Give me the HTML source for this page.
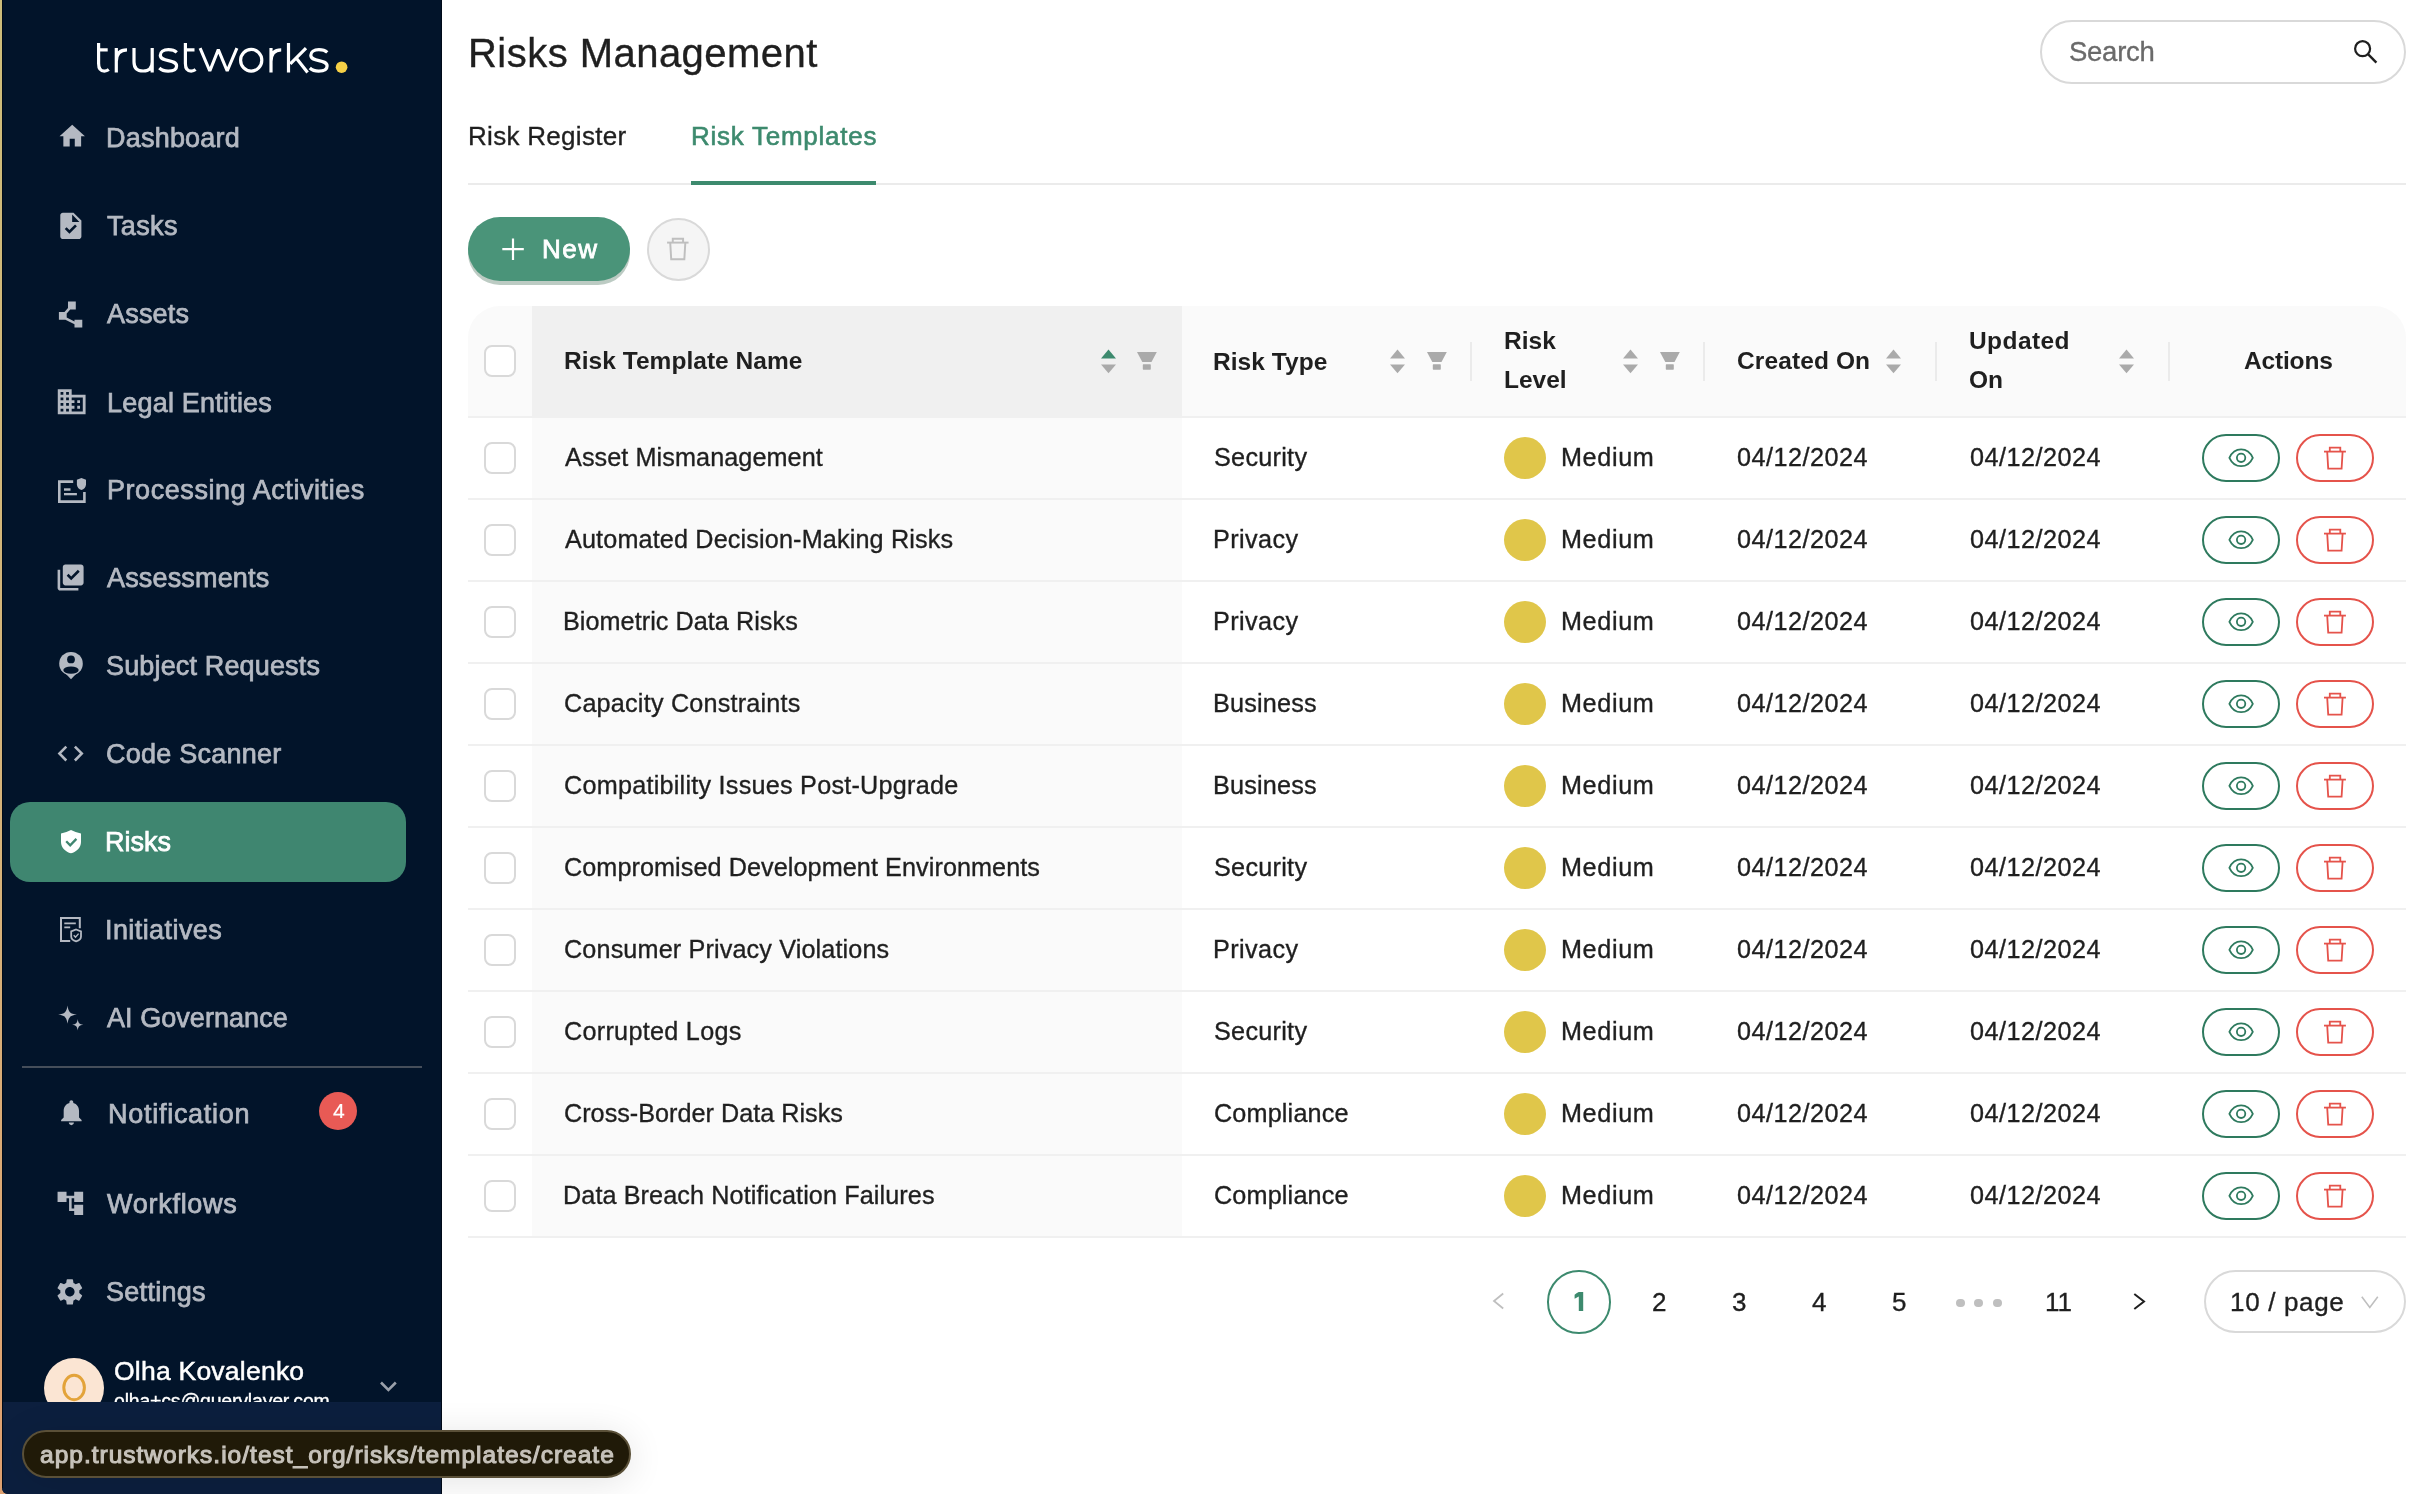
<!DOCTYPE html>
<html><head><meta charset="utf-8"><title>Risks Management</title>
<style>
html,body{margin:0;padding:0;}
body{width:2426px;height:1494px;overflow:hidden;position:relative;background:#fff;font-family:"Liberation Sans", sans-serif;}
.t{position:absolute;white-space:pre;line-height:1;will-change:transform;}
.a{position:absolute;display:block;}
.r{position:absolute;}
</style></head><body>
<div class="r" style="left:0px;top:0px;width:2px;height:1494px;background:linear-gradient(#cdbd7a,#d6b27a 60%,#e0a070);"></div><div class="r" style="left:0px;top:1470px;width:20px;height:24px;background:#dda070;"></div><div class="r" style="left:2px;top:0px;width:440px;height:1494px;background:#02142a;border-bottom-left-radius:6px;"></div><div class="r" style="left:2px;top:0px;width:1px;height:1488px;background:#000a18;"></div><div class="r" style="left:441px;top:0px;width:1px;height:1494px;background:#000a18;"></div><svg class="a" style="left:80px;top:30px" width="280" height="55" viewBox="80 30 280 55"><path d="M98.6 43V63.5C98.6 68.8 100.8 71.1 104.3 71.1C105.9 71.1 107.5 70.6 108.8 69.6M97 49.9H107.7M116.3 48.1V72.6M116.3 61.5C116.3 53.5 120.5 49.8 127 49.8M134 48.1V62C134 68 137.3 71 143.1 71C148.9 71 152.2 68 152.2 62M152.2 48.1V72.6M176.8 52.4C174.6 50.4 171.6 49.7 168.4 49.7C163.2 49.7 160.3 52 160.3 55.3C160.3 62.6 176.6 58.6 176.6 66C176.6 69.3 173.4 71.1 168.2 71.1C164.5 71.1 161.4 70 159.3 68M185.39999999999998 43V63.5C185.39999999999998 68.8 187.6 71.1 191.1 71.1C192.7 71.1 194.3 70.6 195.6 69.6M183.8 49.9H194.5M271 48.1V72.6M271 61.5C271 53.5 274.9 49.8 281.2 49.8M288.5 42.9V72.6M306 48.1L290.3 63.8M296.2 58L307.6 72.6M327.3 52.4C325.1 50.4 322.1 49.7 318.9 49.7C313.7 49.7 310.8 52 310.8 55.3C310.8 62.6 327.1 58.6 327.1 66C327.1 69.3 323.9 71.1 318.7 71.1C315.0 71.1 311.9 70 309.8 68" fill="none" stroke="#fff" stroke-width="3.2"/><path d="M200.1 48.1L209.8 71L218.3 49.6L227.2 71L236.9 48.1" fill="none" stroke="#fff" stroke-width="3.1" stroke-linejoin="bevel"/><ellipse cx="251.2" cy="60.25" rx="10.6" ry="10.85" fill="none" stroke="#fff" stroke-width="3.2"/><circle cx="341.6" cy="67.2" r="5.8" fill="#f6d046"/></svg><div class="r" style="left:10px;top:802px;width:396px;height:80px;background:#3f8670;border-radius:20px;"></div><div class="r" style="left:22px;top:1066px;width:400px;height:2px;background:#454e5a;"></div><div class="r" style="left:319px;top:1092px;width:38px;height:38px;background:#e85a55;border-radius:50%;"></div><div class="r" style="left:44px;top:1357.6px;width:60px;height:60px;background:#fbe5d3;border-radius:50%;"></div><svg class="a" style="left:40px;top:1350px;" width="70" height="70" viewBox="0 0 70 70"><ellipse cx="34.1" cy="37.5" rx="10.3" ry="12.2" fill="none" stroke="#e3a33a" stroke-width="3"/></svg><svg class="a" style="left:370px;top:1370px;" width="40" height="30" viewBox="0 0 40 30"><polyline points="11,12.5 18.4,20 25.8,12.5" fill="none" stroke="#9aa0aa" stroke-width="2.6"/></svg><svg class="a" style="left:57.00px;top:121.10px" width="30.48" height="30.48" viewBox="0 0 24 24"><path fill="#b4b9c2" d="M10 20v-6h4v6h5v-8h3L12 3 2 12h3v8z"/></svg><svg class="a" style="left:54.90px;top:210.30px" width="31.68" height="31.68" viewBox="0 0 24 24"><path fill="#b4b9c2" d="M14 2H6c-1.1 0-1.99.9-1.99 2L4 20c0 1.1.89 2 1.99 2H18c1.1 0 2-.9 2-2V8l-6-6zm-3.06 16L7.4 14.46l1.41-1.41 2.12 2.12 4.24-4.24 1.41 1.41L10.94 18zM13 9V3.5L18.5 9H13z"/></svg><svg class="a" style="left:55.10px;top:298.50px" width="31.20" height="31.20" viewBox="0 0 24 24"><path fill="#b4b9c2" d="M15 16v1.26l-6-3v-3.17L11.7 8H16V2h-6v4.9L7.3 10H3v6h5l7 3.5V22h6v-6z"/></svg><svg class="a" style="left:55.20px;top:384.80px" width="33.36" height="33.36" viewBox="0 0 24 24"><path fill="#b4b9c2" d="M12 7V3H2v18h20V7H12zM6 19H4v-2h2v2zm0-4H4v-2h2v2zm0-4H4V9h2v2zm0-4H4V5h2v2zm4 12H8v-2h2v2zm0-4H8v-2h2v2zm0-4H8V9h2v2zm0-4H8V5h2v2zm10 12h-8v-2h2v-2h-2v-2h2v-2h-2V9h8v10zm-2-8h-2v2h2v-2zm0 4h-2v2h2v-2z"/></svg><svg class="a" style="left:55.30px;top:562.40px" width="31.20" height="31.20" viewBox="0 0 24 24"><path fill="#b4b9c2" d="M20 2H8c-1.1 0-2 .9-2 2v12c0 1.1.9 2 2 2h12c1.1 0 2-.9 2-2V4c0-1.1-.9-2-2-2zm-7.53 12L9 10.5l1.4-1.41 2.07 2.08L17.6 6 19 7.41 12.47 14zM4 6H2v14c0 1.1.9 2 2 2h14v-2H4V6z"/></svg><svg class="a" style="left:55.40px;top:738.20px" width="31.20" height="31.20" viewBox="0 0 24 24"><path fill="#b4b9c2" d="M9.4 16.6L4.8 12l4.6-4.6L8 6l-6 6 6 6 1.4-1.4zm5.2 0l4.6-4.6-4.6-4.6L16 6l6 6-6 6-1.4-1.4z"/></svg><svg class="a" style="left:55.70px;top:1097.40px" width="30.72" height="30.72" viewBox="0 0 24 24"><path fill="#b4b9c2" d="M12 22c1.1 0 2-.9 2-2h-4c0 1.1.89 2 2 2zm6-6v-5c0-3.07-1.64-5.64-4.5-6.32V4c0-.83-.67-1.5-1.5-1.5s-1.5.67-1.5 1.5v.68C7.63 5.36 6 7.92 6 11v5l-2 2v1h16v-1l-2-2z"/></svg><svg class="a" style="left:55.40px;top:1188.20px" width="30.72" height="30.72" viewBox="0 0 24 24"><path fill="#b4b9c2" d="M22 11V3h-7v3H9V3H2v8h7V8h2v10h4v3h7v-8h-7v3h-2V8h2v3z"/></svg><svg class="a" style="left:54.40px;top:1276.40px" width="31.68" height="31.68" viewBox="0 0 24 24"><path fill="#b4b9c2" d="M19.14 12.94c.04-.3.06-.61.06-.94 0-.32-.02-.64-.07-.94l2.03-1.58c.18-.14.23-.41.12-.61l-1.92-3.32c-.12-.22-.37-.29-.59-.22l-2.39.96c-.5-.38-1.03-.7-1.62-.94l-.36-2.54c-.04-.24-.24-.41-.48-.41h-3.84c-.24 0-.43.17-.47.41l-.36 2.54c-.59.24-1.13.57-1.62.94l-2.39-.96c-.22-.08-.47 0-.59.22L2.74 8.87c-.12.21-.08.47.12.61l2.03 1.58c-.05.3-.09.63-.09.94s.02.64.07.94l-2.03 1.58c-.18.14-.23.41-.12.61l1.92 3.32c.12.22.37.29.59.22l2.39-.96c.5.38 1.03.7 1.62.94l.36 2.54c.05.24.24.41.48.41h3.84c.24 0 .44-.17.47-.41l.36-2.54c.59-.24 1.13-.56 1.62-.94l2.39.96c.22.08.47 0 .59-.22l1.92-3.32c.12-.22.07-.47-.12-.61l-2.01-1.58zM12 15.6c-1.98 0-3.6-1.62-3.6-3.6s1.62-3.6 3.6-3.6 3.6 1.62 3.6 3.6-1.62 3.6-3.6 3.6z"/></svg><svg class="a" style="left:50px;top:470px" width="45" height="40" viewBox="50 470 45 40"><path d="M73.2 481.6H59.3V501.6H84.4V492" fill="none" stroke="#b4b9c2" stroke-width="2.6"/><rect x="64" y="488.3" width="6.5" height="2.4" fill="#b4b9c2"/><rect x="64" y="493" width="12.9" height="2.3" fill="#b4b9c2"/><path d="M81.45 477.9L86 479.7V484.2C86 487 84 489.3 81.45 490.1C78.9 489.3 76.9 487 76.9 484.2V479.7Z" fill="#b4b9c2"/></svg><svg class="a" style="left:50px;top:640px" width="45" height="45" viewBox="50 640 45 45"><circle cx="71" cy="663.7" r="11.8" fill="#b4b9c2"/><path d="M65.5 673.5H76.5L71 679.2Z" fill="#b4b9c2"/><circle cx="71" cy="659.4" r="3.9" fill="#02142a"/><ellipse cx="71" cy="670.1" rx="7.7" ry="3.7" fill="#02142a"/></svg><svg class="a" style="left:50px;top:822px" width="45" height="40" viewBox="50 822 45 40"><path d="M71 830Q76 832.6 81 833.5V842C81 847.5 76.5 852 71 853.3C65.5 852 61 847.5 61 842V833.5Q66 832.6 71 830Z" fill="#fff"/><polyline points="66.2,841.3 70.2,845.3 76.4,838.9" fill="none" stroke="#3f8670" stroke-width="2.3"/></svg><svg class="a" style="left:50px;top:910px" width="45" height="40" viewBox="50 910 45 40"><path d="M70.2 940.9H61V918.1H79.8V928.2" fill="none" stroke="#b4b9c2" stroke-width="2"/><path d="M64.3 923.4H75.8M64.3 927.4H70.2" fill="none" stroke="#b4b9c2" stroke-width="1.6"/><path d="M76.1 929.5L81 931.4V936.5C81 938.6 79 940.6 76.1 941.4C73.2 940.6 71.2 938.6 71.2 936.5V931.4Z" fill="none" stroke="#b4b9c2" stroke-width="1.8"/><polyline points="73.7,935.2 75.5,937.1 78.6,933.6" fill="none" stroke="#b4b9c2" stroke-width="1.4"/></svg><svg class="a" style="left:50px;top:998px" width="45" height="40" viewBox="50 998 45 40"><path d="M67.5 1005.4C68.41 1012.0 70.1 1013.69 76.9 1014.6C70.1 1015.51 68.41 1017.2 67.5 1023.8000000000001C66.59 1017.2 64.9 1015.51 58.1 1014.6C64.9 1013.69 66.59 1012.0 67.5 1005.4Z" fill="#b4b9c2"/><path d="M77.7 1019.0999999999999C78.26 1023.1999999999999 79.3 1024.24 83.3 1024.8C79.3 1025.36 78.26 1026.3999999999999 77.7 1030.5C77.14 1026.3999999999999 76.10000000000001 1025.36 72.10000000000001 1024.8C76.10000000000001 1024.24 77.14 1023.1999999999999 77.7 1019.0999999999999Z" fill="#b4b9c2"/></svg><div class="r" style="left:2040px;top:20px;width:366px;height:64px;background:#fff;box-sizing:border-box;border:2px solid #d9d9d9;border-radius:32px;"></div><svg class="a" style="left:2345px;top:35px" width="40" height="35" viewBox="2345 35 40 35"><circle cx="2362.6" cy="48.7" r="7.5" fill="none" stroke="#1f1f1f" stroke-width="2.2"/><line x1="2368" y1="54.2" x2="2376.4" y2="62.6" stroke="#1f1f1f" stroke-width="2.4"/></svg><div class="r" style="left:468px;top:183px;width:1938px;height:2px;background:#ebebeb;"></div><div class="r" style="left:691px;top:181px;width:185px;height:4px;background:#3d8a6e;"></div><div class="r" style="left:468px;top:217px;width:162px;height:64px;background:#4a9479;border-radius:32px;box-shadow:0 4px 0 #bccbc3;"></div><svg class="a" style="left:495px;top:232px" width="35" height="35" viewBox="495 232 35 35"><path d="M502.3 249.1H523.8M513 238.4V259.9" stroke="#fff" stroke-width="2.2" fill="none"/></svg><div class="r" style="left:646.5px;top:217.5px;width:63px;height:63px;background:#f5f5f5;box-sizing:border-box;border:2px solid #d9d9d9;border-radius:50%;"></div><svg class="a" style="left:660px;top:232px" width="35" height="35" viewBox="660 232 35 35"><g transform="translate(666.8 237.7) scale(0.98)" fill="none" stroke="#bfbfbf" stroke-width="2"><path d="M0.3 5H22.2"/><path d="M6.1 5V1H16.6V5"/><path d="M3.5 5L4.5 22H17.9L18.9 5"/></g></svg><div class="r" style="left:468px;top:306px;width:1938px;height:110px;background:#fafafa;border-radius:32px 32px 0 0;"></div><div class="r" style="left:532px;top:306px;width:650px;height:110px;background:#f0f0f0;"></div><div class="r" style="left:532px;top:418px;width:650px;height:818px;background:#fafafa;"></div><div class="r" style="left:468px;top:416px;width:1938px;height:2px;background:#f0f0f0;"></div><div class="r" style="left:468px;top:498px;width:1938px;height:2px;background:#f0f0f0;"></div><div class="r" style="left:468px;top:580px;width:1938px;height:2px;background:#f0f0f0;"></div><div class="r" style="left:468px;top:662px;width:1938px;height:2px;background:#f0f0f0;"></div><div class="r" style="left:468px;top:744px;width:1938px;height:2px;background:#f0f0f0;"></div><div class="r" style="left:468px;top:826px;width:1938px;height:2px;background:#f0f0f0;"></div><div class="r" style="left:468px;top:908px;width:1938px;height:2px;background:#f0f0f0;"></div><div class="r" style="left:468px;top:990px;width:1938px;height:2px;background:#f0f0f0;"></div><div class="r" style="left:468px;top:1072px;width:1938px;height:2px;background:#f0f0f0;"></div><div class="r" style="left:468px;top:1154px;width:1938px;height:2px;background:#f0f0f0;"></div><div class="r" style="left:468px;top:1236px;width:1938px;height:2px;background:#f0f0f0;"></div><div class="r" style="left:484px;top:344.5px;width:32px;height:32px;background:#fff;box-sizing:border-box;border:2px solid #d9d9d9;border-radius:8px;"></div><div class="r" style="left:484px;top:441.5px;width:32px;height:32px;background:#fff;box-sizing:border-box;border:2px solid #d9d9d9;border-radius:8px;"></div><div class="r" style="left:484px;top:523.5px;width:32px;height:32px;background:#fff;box-sizing:border-box;border:2px solid #d9d9d9;border-radius:8px;"></div><div class="r" style="left:484px;top:605.5px;width:32px;height:32px;background:#fff;box-sizing:border-box;border:2px solid #d9d9d9;border-radius:8px;"></div><div class="r" style="left:484px;top:687.5px;width:32px;height:32px;background:#fff;box-sizing:border-box;border:2px solid #d9d9d9;border-radius:8px;"></div><div class="r" style="left:484px;top:769.5px;width:32px;height:32px;background:#fff;box-sizing:border-box;border:2px solid #d9d9d9;border-radius:8px;"></div><div class="r" style="left:484px;top:851.5px;width:32px;height:32px;background:#fff;box-sizing:border-box;border:2px solid #d9d9d9;border-radius:8px;"></div><div class="r" style="left:484px;top:933.5px;width:32px;height:32px;background:#fff;box-sizing:border-box;border:2px solid #d9d9d9;border-radius:8px;"></div><div class="r" style="left:484px;top:1015.5px;width:32px;height:32px;background:#fff;box-sizing:border-box;border:2px solid #d9d9d9;border-radius:8px;"></div><div class="r" style="left:484px;top:1097.5px;width:32px;height:32px;background:#fff;box-sizing:border-box;border:2px solid #d9d9d9;border-radius:8px;"></div><div class="r" style="left:484px;top:1179.5px;width:32px;height:32px;background:#fff;box-sizing:border-box;border:2px solid #d9d9d9;border-radius:8px;"></div><svg class="a" style="left:1099.0px;top:347px" width="20" height="30" viewBox="1099.0 347 20 30"><path d="M1101.0 358.4L1108.5 349.4L1116.0 358.4Z" fill="#3d8a6e"/><path d="M1101.0 364.4L1108.5 373.3L1116.0 364.4Z" fill="#aaaaaa"/></svg><svg class="a" style="left:1135.2px;top:349px" width="25" height="24" viewBox="1135.2 349 25 24"><path d="M1137.2 351.9H1157.0L1151.7 362.1H1142.5Z" fill="#aaaaaa"/><rect x="1143.0" y="364.3" width="8" height="5.4" rx="0.6" fill="#aaaaaa"/></svg><svg class="a" style="left:1388.2px;top:347px" width="20" height="30" viewBox="1388.2 347 20 30"><path d="M1390.2 358.4L1397.7 349.4L1405.2 358.4Z" fill="#aaaaaa"/><path d="M1390.2 364.4L1397.7 373.3L1405.2 364.4Z" fill="#aaaaaa"/></svg><svg class="a" style="left:1424.6px;top:349px" width="25" height="24" viewBox="1424.6 349 25 24"><path d="M1426.6 351.9H1446.3999999999999L1441.1 362.1H1431.8999999999999Z" fill="#aaaaaa"/><rect x="1432.3999999999999" y="364.3" width="8" height="5.4" rx="0.6" fill="#aaaaaa"/></svg><svg class="a" style="left:1621.4px;top:347px" width="20" height="30" viewBox="1621.4 347 20 30"><path d="M1623.4 358.4L1630.9 349.4L1638.4 358.4Z" fill="#aaaaaa"/><path d="M1623.4 364.4L1630.9 373.3L1638.4 364.4Z" fill="#aaaaaa"/></svg><svg class="a" style="left:1657.7px;top:349px" width="25" height="24" viewBox="1657.7 349 25 24"><path d="M1659.7 351.9H1679.5L1674.2 362.1H1665.0Z" fill="#aaaaaa"/><rect x="1665.5" y="364.3" width="8" height="5.4" rx="0.6" fill="#aaaaaa"/></svg><svg class="a" style="left:1883.6px;top:347px" width="20" height="30" viewBox="1883.6 347 20 30"><path d="M1885.6 358.4L1893.1 349.4L1900.6 358.4Z" fill="#aaaaaa"/><path d="M1885.6 364.4L1893.1 373.3L1900.6 364.4Z" fill="#aaaaaa"/></svg><svg class="a" style="left:2116.5px;top:347px" width="20" height="30" viewBox="2116.5 347 20 30"><path d="M2118.5 358.4L2126.0 349.4L2133.5 358.4Z" fill="#aaaaaa"/><path d="M2118.5 364.4L2126.0 373.3L2133.5 364.4Z" fill="#aaaaaa"/></svg><div class="r" style="left:1469.7px;top:341.5px;width:2px;height:39px;background:#ebebeb;"></div><div class="r" style="left:1702.6px;top:341.5px;width:2px;height:39px;background:#ebebeb;"></div><div class="r" style="left:1934.8px;top:341.5px;width:2px;height:39px;background:#ebebeb;"></div><div class="r" style="left:2167.9px;top:341.5px;width:2px;height:39px;background:#ebebeb;"></div><div class="r" style="left:1504px;top:437px;width:42px;height:42px;background:#e0c64a;border-radius:50%;"></div><div class="r" style="left:2202.2px;top:434.2px;width:77.7px;height:47.5px;background:#fff;box-sizing:border-box;border:2px solid #2e7a5e;border-radius:24px;"></div><div class="r" style="left:2296.2px;top:434.2px;width:77.6px;height:47.5px;background:#fff;box-sizing:border-box;border:2px solid #e5534b;border-radius:24px;"></div><svg class="a" style="left:2220px;top:440px" width="45" height="35" viewBox="2220 440 45 35"><path d="M2229.4 457.8C2234.5 446.6 2247.7 446.6 2252.8 457.8C2247.7 469 2234.5 469 2229.4 457.8Z" fill="none" stroke="#2e7a5e" stroke-width="1.8"/><circle cx="2241.1" cy="457.8" r="4.2" fill="none" stroke="#2e7a5e" stroke-width="1.8"/></svg><svg class="a" style="left:2315px;top:440px" width="40" height="35" viewBox="2315 440 40 35"><g transform="translate(2323.7 446.6) scale(1.0)" fill="none" stroke="#e5534b" stroke-width="1.8"><path d="M0.3 5H22.2"/><path d="M6.1 5V1H16.6V5"/><path d="M3.5 5L4.5 22H17.9L18.9 5"/></g></svg><div class="r" style="left:1504px;top:519px;width:42px;height:42px;background:#e0c64a;border-radius:50%;"></div><div class="r" style="left:2202.2px;top:516.2px;width:77.7px;height:47.5px;background:#fff;box-sizing:border-box;border:2px solid #2e7a5e;border-radius:24px;"></div><div class="r" style="left:2296.2px;top:516.2px;width:77.6px;height:47.5px;background:#fff;box-sizing:border-box;border:2px solid #e5534b;border-radius:24px;"></div><svg class="a" style="left:2220px;top:522px" width="45" height="35" viewBox="2220 522 45 35"><path d="M2229.4 539.8C2234.5 528.6 2247.7 528.6 2252.8 539.8C2247.7 551 2234.5 551 2229.4 539.8Z" fill="none" stroke="#2e7a5e" stroke-width="1.8"/><circle cx="2241.1" cy="539.8" r="4.2" fill="none" stroke="#2e7a5e" stroke-width="1.8"/></svg><svg class="a" style="left:2315px;top:522px" width="40" height="35" viewBox="2315 522 40 35"><g transform="translate(2323.7 528.6) scale(1.0)" fill="none" stroke="#e5534b" stroke-width="1.8"><path d="M0.3 5H22.2"/><path d="M6.1 5V1H16.6V5"/><path d="M3.5 5L4.5 22H17.9L18.9 5"/></g></svg><div class="r" style="left:1504px;top:601px;width:42px;height:42px;background:#e0c64a;border-radius:50%;"></div><div class="r" style="left:2202.2px;top:598.2px;width:77.7px;height:47.5px;background:#fff;box-sizing:border-box;border:2px solid #2e7a5e;border-radius:24px;"></div><div class="r" style="left:2296.2px;top:598.2px;width:77.6px;height:47.5px;background:#fff;box-sizing:border-box;border:2px solid #e5534b;border-radius:24px;"></div><svg class="a" style="left:2220px;top:604px" width="45" height="35" viewBox="2220 604 45 35"><path d="M2229.4 621.8C2234.5 610.6 2247.7 610.6 2252.8 621.8C2247.7 633 2234.5 633 2229.4 621.8Z" fill="none" stroke="#2e7a5e" stroke-width="1.8"/><circle cx="2241.1" cy="621.8" r="4.2" fill="none" stroke="#2e7a5e" stroke-width="1.8"/></svg><svg class="a" style="left:2315px;top:604px" width="40" height="35" viewBox="2315 604 40 35"><g transform="translate(2323.7 610.6) scale(1.0)" fill="none" stroke="#e5534b" stroke-width="1.8"><path d="M0.3 5H22.2"/><path d="M6.1 5V1H16.6V5"/><path d="M3.5 5L4.5 22H17.9L18.9 5"/></g></svg><div class="r" style="left:1504px;top:683px;width:42px;height:42px;background:#e0c64a;border-radius:50%;"></div><div class="r" style="left:2202.2px;top:680.2px;width:77.7px;height:47.5px;background:#fff;box-sizing:border-box;border:2px solid #2e7a5e;border-radius:24px;"></div><div class="r" style="left:2296.2px;top:680.2px;width:77.6px;height:47.5px;background:#fff;box-sizing:border-box;border:2px solid #e5534b;border-radius:24px;"></div><svg class="a" style="left:2220px;top:686px" width="45" height="35" viewBox="2220 686 45 35"><path d="M2229.4 703.8C2234.5 692.6 2247.7 692.6 2252.8 703.8C2247.7 715 2234.5 715 2229.4 703.8Z" fill="none" stroke="#2e7a5e" stroke-width="1.8"/><circle cx="2241.1" cy="703.8" r="4.2" fill="none" stroke="#2e7a5e" stroke-width="1.8"/></svg><svg class="a" style="left:2315px;top:686px" width="40" height="35" viewBox="2315 686 40 35"><g transform="translate(2323.7 692.6) scale(1.0)" fill="none" stroke="#e5534b" stroke-width="1.8"><path d="M0.3 5H22.2"/><path d="M6.1 5V1H16.6V5"/><path d="M3.5 5L4.5 22H17.9L18.9 5"/></g></svg><div class="r" style="left:1504px;top:765px;width:42px;height:42px;background:#e0c64a;border-radius:50%;"></div><div class="r" style="left:2202.2px;top:762.2px;width:77.7px;height:47.5px;background:#fff;box-sizing:border-box;border:2px solid #2e7a5e;border-radius:24px;"></div><div class="r" style="left:2296.2px;top:762.2px;width:77.6px;height:47.5px;background:#fff;box-sizing:border-box;border:2px solid #e5534b;border-radius:24px;"></div><svg class="a" style="left:2220px;top:768px" width="45" height="35" viewBox="2220 768 45 35"><path d="M2229.4 785.8C2234.5 774.6 2247.7 774.6 2252.8 785.8C2247.7 797 2234.5 797 2229.4 785.8Z" fill="none" stroke="#2e7a5e" stroke-width="1.8"/><circle cx="2241.1" cy="785.8" r="4.2" fill="none" stroke="#2e7a5e" stroke-width="1.8"/></svg><svg class="a" style="left:2315px;top:768px" width="40" height="35" viewBox="2315 768 40 35"><g transform="translate(2323.7 774.6) scale(1.0)" fill="none" stroke="#e5534b" stroke-width="1.8"><path d="M0.3 5H22.2"/><path d="M6.1 5V1H16.6V5"/><path d="M3.5 5L4.5 22H17.9L18.9 5"/></g></svg><div class="r" style="left:1504px;top:847px;width:42px;height:42px;background:#e0c64a;border-radius:50%;"></div><div class="r" style="left:2202.2px;top:844.2px;width:77.7px;height:47.5px;background:#fff;box-sizing:border-box;border:2px solid #2e7a5e;border-radius:24px;"></div><div class="r" style="left:2296.2px;top:844.2px;width:77.6px;height:47.5px;background:#fff;box-sizing:border-box;border:2px solid #e5534b;border-radius:24px;"></div><svg class="a" style="left:2220px;top:850px" width="45" height="35" viewBox="2220 850 45 35"><path d="M2229.4 867.8C2234.5 856.6 2247.7 856.6 2252.8 867.8C2247.7 879 2234.5 879 2229.4 867.8Z" fill="none" stroke="#2e7a5e" stroke-width="1.8"/><circle cx="2241.1" cy="867.8" r="4.2" fill="none" stroke="#2e7a5e" stroke-width="1.8"/></svg><svg class="a" style="left:2315px;top:850px" width="40" height="35" viewBox="2315 850 40 35"><g transform="translate(2323.7 856.6) scale(1.0)" fill="none" stroke="#e5534b" stroke-width="1.8"><path d="M0.3 5H22.2"/><path d="M6.1 5V1H16.6V5"/><path d="M3.5 5L4.5 22H17.9L18.9 5"/></g></svg><div class="r" style="left:1504px;top:929px;width:42px;height:42px;background:#e0c64a;border-radius:50%;"></div><div class="r" style="left:2202.2px;top:926.2px;width:77.7px;height:47.5px;background:#fff;box-sizing:border-box;border:2px solid #2e7a5e;border-radius:24px;"></div><div class="r" style="left:2296.2px;top:926.2px;width:77.6px;height:47.5px;background:#fff;box-sizing:border-box;border:2px solid #e5534b;border-radius:24px;"></div><svg class="a" style="left:2220px;top:932px" width="45" height="35" viewBox="2220 932 45 35"><path d="M2229.4 949.8C2234.5 938.6 2247.7 938.6 2252.8 949.8C2247.7 961 2234.5 961 2229.4 949.8Z" fill="none" stroke="#2e7a5e" stroke-width="1.8"/><circle cx="2241.1" cy="949.8" r="4.2" fill="none" stroke="#2e7a5e" stroke-width="1.8"/></svg><svg class="a" style="left:2315px;top:932px" width="40" height="35" viewBox="2315 932 40 35"><g transform="translate(2323.7 938.6) scale(1.0)" fill="none" stroke="#e5534b" stroke-width="1.8"><path d="M0.3 5H22.2"/><path d="M6.1 5V1H16.6V5"/><path d="M3.5 5L4.5 22H17.9L18.9 5"/></g></svg><div class="r" style="left:1504px;top:1011px;width:42px;height:42px;background:#e0c64a;border-radius:50%;"></div><div class="r" style="left:2202.2px;top:1008.2px;width:77.7px;height:47.5px;background:#fff;box-sizing:border-box;border:2px solid #2e7a5e;border-radius:24px;"></div><div class="r" style="left:2296.2px;top:1008.2px;width:77.6px;height:47.5px;background:#fff;box-sizing:border-box;border:2px solid #e5534b;border-radius:24px;"></div><svg class="a" style="left:2220px;top:1014px" width="45" height="35" viewBox="2220 1014 45 35"><path d="M2229.4 1031.8C2234.5 1020.6 2247.7 1020.6 2252.8 1031.8C2247.7 1043 2234.5 1043 2229.4 1031.8Z" fill="none" stroke="#2e7a5e" stroke-width="1.8"/><circle cx="2241.1" cy="1031.8" r="4.2" fill="none" stroke="#2e7a5e" stroke-width="1.8"/></svg><svg class="a" style="left:2315px;top:1014px" width="40" height="35" viewBox="2315 1014 40 35"><g transform="translate(2323.7 1020.6) scale(1.0)" fill="none" stroke="#e5534b" stroke-width="1.8"><path d="M0.3 5H22.2"/><path d="M6.1 5V1H16.6V5"/><path d="M3.5 5L4.5 22H17.9L18.9 5"/></g></svg><div class="r" style="left:1504px;top:1093px;width:42px;height:42px;background:#e0c64a;border-radius:50%;"></div><div class="r" style="left:2202.2px;top:1090.2px;width:77.7px;height:47.5px;background:#fff;box-sizing:border-box;border:2px solid #2e7a5e;border-radius:24px;"></div><div class="r" style="left:2296.2px;top:1090.2px;width:77.6px;height:47.5px;background:#fff;box-sizing:border-box;border:2px solid #e5534b;border-radius:24px;"></div><svg class="a" style="left:2220px;top:1096px" width="45" height="35" viewBox="2220 1096 45 35"><path d="M2229.4 1113.8C2234.5 1102.6 2247.7 1102.6 2252.8 1113.8C2247.7 1125 2234.5 1125 2229.4 1113.8Z" fill="none" stroke="#2e7a5e" stroke-width="1.8"/><circle cx="2241.1" cy="1113.8" r="4.2" fill="none" stroke="#2e7a5e" stroke-width="1.8"/></svg><svg class="a" style="left:2315px;top:1096px" width="40" height="35" viewBox="2315 1096 40 35"><g transform="translate(2323.7 1102.6) scale(1.0)" fill="none" stroke="#e5534b" stroke-width="1.8"><path d="M0.3 5H22.2"/><path d="M6.1 5V1H16.6V5"/><path d="M3.5 5L4.5 22H17.9L18.9 5"/></g></svg><div class="r" style="left:1504px;top:1175px;width:42px;height:42px;background:#e0c64a;border-radius:50%;"></div><div class="r" style="left:2202.2px;top:1172.2px;width:77.7px;height:47.5px;background:#fff;box-sizing:border-box;border:2px solid #2e7a5e;border-radius:24px;"></div><div class="r" style="left:2296.2px;top:1172.2px;width:77.6px;height:47.5px;background:#fff;box-sizing:border-box;border:2px solid #e5534b;border-radius:24px;"></div><svg class="a" style="left:2220px;top:1178px" width="45" height="35" viewBox="2220 1178 45 35"><path d="M2229.4 1195.8C2234.5 1184.6 2247.7 1184.6 2252.8 1195.8C2247.7 1207 2234.5 1207 2229.4 1195.8Z" fill="none" stroke="#2e7a5e" stroke-width="1.8"/><circle cx="2241.1" cy="1195.8" r="4.2" fill="none" stroke="#2e7a5e" stroke-width="1.8"/></svg><svg class="a" style="left:2315px;top:1178px" width="40" height="35" viewBox="2315 1178 40 35"><g transform="translate(2323.7 1184.6) scale(1.0)" fill="none" stroke="#e5534b" stroke-width="1.8"><path d="M0.3 5H22.2"/><path d="M6.1 5V1H16.6V5"/><path d="M3.5 5L4.5 22H17.9L18.9 5"/></g></svg><svg class="a" style="left:1485px;top:1285px" width="30" height="30" viewBox="1485 1285 30 30"><polyline points="1503.2,1293.5 1494,1301 1503.2,1308.5" fill="none" stroke="#bfbfbf" stroke-width="1.8"/></svg><div class="r" style="left:1547.3px;top:1270.4px;width:63.5px;height:63.5px;background:#fff;box-sizing:border-box;border:2px solid #3d8a6e;border-radius:50%;"></div><svg class="a" style="left:1565px;top:1285px" width="30" height="30" viewBox="1565 1285 30 30"><path d="M1578.7 1291.9H1583.2V1311H1578.8V1296.4L1574.6 1298.7V1294.8Q1576.4 1292.8 1578.7 1291.9Z" fill="#3d8a6e"/></svg><div class="r" style="left:1956.0px;top:1298.6px;width:8.6px;height:8.6px;background:#bfbfbf;border-radius:50%;"></div><div class="r" style="left:1974.4px;top:1298.6px;width:8.6px;height:8.6px;background:#bfbfbf;border-radius:50%;"></div><div class="r" style="left:1993.2px;top:1298.6px;width:8.6px;height:8.6px;background:#bfbfbf;border-radius:50%;"></div><svg class="a" style="left:2125px;top:1285px" width="30" height="30" viewBox="2125 1285 30 30"><polyline points="2134.3,1294 2144,1301.5 2134.3,1309" fill="none" stroke="#1f1f1f" stroke-width="2"/></svg><div class="r" style="left:2203.6px;top:1270.2px;width:202px;height:63px;background:#fff;box-sizing:border-box;border:2px solid #d9d9d9;border-radius:32px;"></div><svg class="a" style="left:2355px;top:1290px" width="30" height="25" viewBox="2355 1290 30 25"><polyline points="2361.8,1296.8 2369.8,1307.5 2377.8,1296.8" fill="none" stroke="#bfbfbf" stroke-width="1.6"/></svg>
<div class="t" style="left:106.10px;top:125.00px;font-size:27px;color:#b4b9c2;letter-spacing:0.212px;-webkit-text-stroke:0.75px #b4b9c2;">Dashboard</div><div class="t" style="left:107.10px;top:213.00px;font-size:27px;color:#b4b9c2;letter-spacing:0.350px;-webkit-text-stroke:0.75px #b4b9c2;">Tasks</div><div class="t" style="left:106.50px;top:301.00px;font-size:27px;color:#b4b9c2;letter-spacing:0.200px;-webkit-text-stroke:0.75px #b4b9c2;">Assets</div><div class="t" style="left:106.90px;top:389.50px;font-size:27px;color:#b4b9c2;letter-spacing:0.208px;-webkit-text-stroke:0.75px #b4b9c2;">Legal Entities</div><div class="t" style="left:106.90px;top:477.00px;font-size:27px;color:#b4b9c2;letter-spacing:0.560px;-webkit-text-stroke:0.75px #b4b9c2;">Processing Activities</div><div class="t" style="left:106.60px;top:565.20px;font-size:27px;color:#b4b9c2;letter-spacing:0.160px;-webkit-text-stroke:0.75px #b4b9c2;">Assessments</div><div class="t" style="left:105.60px;top:653.20px;font-size:27px;color:#b4b9c2;letter-spacing:0.153px;-webkit-text-stroke:0.75px #b4b9c2;">Subject Requests</div><div class="t" style="left:105.60px;top:741.20px;font-size:27px;color:#b4b9c2;letter-spacing:0.245px;-webkit-text-stroke:0.75px #b4b9c2;">Code Scanner</div><div class="t" style="left:105.30px;top:829.10px;font-size:27px;color:#ffffff;-webkit-text-stroke:0.75px #ffffff;">Risks</div><div class="t" style="left:104.60px;top:917.00px;font-size:27px;color:#b4b9c2;letter-spacing:0.420px;-webkit-text-stroke:0.75px #b4b9c2;">Initiatives</div><div class="t" style="left:106.60px;top:1004.80px;font-size:27px;color:#b4b9c2;letter-spacing:0.050px;-webkit-text-stroke:0.75px #b4b9c2;">AI Governance</div><div class="t" style="left:107.70px;top:1101.30px;font-size:27px;color:#b4b9c2;letter-spacing:0.727px;-webkit-text-stroke:0.75px #b4b9c2;">Notification</div><div class="t" style="left:106.80px;top:1191.10px;font-size:27px;color:#b4b9c2;letter-spacing:0.725px;-webkit-text-stroke:0.75px #b4b9c2;">Workflows</div><div class="t" style="left:106.20px;top:1279.00px;font-size:27px;color:#b4b9c2;letter-spacing:0.286px;-webkit-text-stroke:0.75px #b4b9c2;">Settings</div><div class="t" style="left:113.90px;top:1358.00px;font-size:26.5px;color:#ffffff;letter-spacing:0.231px;-webkit-text-stroke:0.5px #ffffff;">Olha Kovalenko</div><div class="t" style="left:113.90px;top:1392.00px;font-size:19.5px;color:#ffffff;letter-spacing:-0.190px;-webkit-text-stroke:0.35px #ffffff;">olha+cs@querylayer.com</div><div class="t" style="left:333.10px;top:1100.00px;font-size:21px;color:#ffffff;-webkit-text-stroke:0.2px #ffffff;">4</div><div class="t" style="left:467.70px;top:32.50px;font-size:40px;color:#1f1f1f;letter-spacing:0.467px;-webkit-text-stroke:0.35px #1f1f1f;">Risks Management</div><div class="t" style="left:2068.50px;top:38.40px;font-size:27.5px;color:#6a6a6a;letter-spacing:-0.260px;-webkit-text-stroke:0.35px #6a6a6a;">Search</div><div class="t" style="left:468.00px;top:122.80px;font-size:26px;color:#1f1f1f;letter-spacing:0.292px;-webkit-text-stroke:0.35px #1f1f1f;">Risk Register</div><div class="t" style="left:690.70px;top:122.80px;font-size:26px;color:#3d8a6e;letter-spacing:0.738px;-webkit-text-stroke:0.6px #3d8a6e;">Risk Templates</div><div class="t" style="left:542.10px;top:236.00px;font-size:26px;color:#ffffff;letter-spacing:1.500px;-webkit-text-stroke:0.8px #ffffff;">New</div><div class="t" style="left:564.00px;top:349.00px;font-size:24.5px;color:#1f1f1f;font-weight:bold;letter-spacing:0.035px;">Risk Template Name</div><div class="t" style="left:1213.10px;top:349.50px;font-size:24.5px;color:#1f1f1f;font-weight:bold;letter-spacing:0.062px;">Risk Type</div><div class="t" style="left:1504.00px;top:329.30px;font-size:24.5px;color:#1f1f1f;font-weight:bold;">Risk</div><div class="t" style="left:1504.00px;top:368.30px;font-size:24.5px;color:#1f1f1f;font-weight:bold;">Level</div><div class="t" style="left:1737.00px;top:349.40px;font-size:24.5px;color:#1f1f1f;font-weight:bold;letter-spacing:0.111px;">Created On</div><div class="t" style="left:1969.20px;top:329.40px;font-size:24.5px;color:#1f1f1f;font-weight:bold;letter-spacing:0.417px;">Updated</div><div class="t" style="left:1969.20px;top:368.30px;font-size:24.5px;color:#1f1f1f;font-weight:bold;">On</div><div class="t" style="left:2244.00px;top:349.40px;font-size:24.5px;color:#1f1f1f;font-weight:bold;letter-spacing:-0.167px;">Actions</div><div class="t" style="left:564.60px;top:445.00px;font-size:25.2px;color:#1f1f1f;letter-spacing:0.089px;-webkit-text-stroke:0.35px #1f1f1f;">Asset Mismanagement</div><div class="t" style="left:1213.80px;top:445.00px;font-size:25.2px;color:#1f1f1f;letter-spacing:0.286px;-webkit-text-stroke:0.35px #1f1f1f;">Security</div><div class="t" style="left:1561.20px;top:445.00px;font-size:25.2px;color:#1f1f1f;letter-spacing:0.640px;-webkit-text-stroke:0.35px #1f1f1f;">Medium</div><div class="t" style="left:1736.80px;top:445.00px;font-size:25.2px;color:#1f1f1f;letter-spacing:0.489px;-webkit-text-stroke:0.35px #1f1f1f;">04/12/2024</div><div class="t" style="left:1969.60px;top:445.00px;font-size:25.2px;color:#1f1f1f;letter-spacing:0.489px;-webkit-text-stroke:0.35px #1f1f1f;">04/12/2024</div><div class="t" style="left:564.60px;top:527.00px;font-size:25.2px;color:#1f1f1f;letter-spacing:0.150px;-webkit-text-stroke:0.35px #1f1f1f;">Automated Decision-Making Risks</div><div class="t" style="left:1212.80px;top:527.00px;font-size:25.2px;color:#1f1f1f;letter-spacing:0.417px;-webkit-text-stroke:0.35px #1f1f1f;">Privacy</div><div class="t" style="left:1561.20px;top:527.00px;font-size:25.2px;color:#1f1f1f;letter-spacing:0.640px;-webkit-text-stroke:0.35px #1f1f1f;">Medium</div><div class="t" style="left:1736.80px;top:527.00px;font-size:25.2px;color:#1f1f1f;letter-spacing:0.489px;-webkit-text-stroke:0.35px #1f1f1f;">04/12/2024</div><div class="t" style="left:1969.60px;top:527.00px;font-size:25.2px;color:#1f1f1f;letter-spacing:0.489px;-webkit-text-stroke:0.35px #1f1f1f;">04/12/2024</div><div class="t" style="left:562.60px;top:609.00px;font-size:25.2px;color:#1f1f1f;letter-spacing:0.053px;-webkit-text-stroke:0.35px #1f1f1f;">Biometric Data Risks</div><div class="t" style="left:1212.80px;top:609.00px;font-size:25.2px;color:#1f1f1f;letter-spacing:0.417px;-webkit-text-stroke:0.35px #1f1f1f;">Privacy</div><div class="t" style="left:1561.20px;top:609.00px;font-size:25.2px;color:#1f1f1f;letter-spacing:0.640px;-webkit-text-stroke:0.35px #1f1f1f;">Medium</div><div class="t" style="left:1736.80px;top:609.00px;font-size:25.2px;color:#1f1f1f;letter-spacing:0.489px;-webkit-text-stroke:0.35px #1f1f1f;">04/12/2024</div><div class="t" style="left:1969.60px;top:609.00px;font-size:25.2px;color:#1f1f1f;letter-spacing:0.489px;-webkit-text-stroke:0.35px #1f1f1f;">04/12/2024</div><div class="t" style="left:563.60px;top:691.00px;font-size:25.2px;color:#1f1f1f;letter-spacing:0.211px;-webkit-text-stroke:0.35px #1f1f1f;">Capacity Constraints</div><div class="t" style="left:1212.80px;top:691.00px;font-size:25.2px;color:#1f1f1f;letter-spacing:0.214px;-webkit-text-stroke:0.35px #1f1f1f;">Business</div><div class="t" style="left:1561.20px;top:691.00px;font-size:25.2px;color:#1f1f1f;letter-spacing:0.640px;-webkit-text-stroke:0.35px #1f1f1f;">Medium</div><div class="t" style="left:1736.80px;top:691.00px;font-size:25.2px;color:#1f1f1f;letter-spacing:0.489px;-webkit-text-stroke:0.35px #1f1f1f;">04/12/2024</div><div class="t" style="left:1969.60px;top:691.00px;font-size:25.2px;color:#1f1f1f;letter-spacing:0.489px;-webkit-text-stroke:0.35px #1f1f1f;">04/12/2024</div><div class="t" style="left:563.60px;top:773.00px;font-size:25.2px;color:#1f1f1f;letter-spacing:0.244px;-webkit-text-stroke:0.35px #1f1f1f;">Compatibility Issues Post-Upgrade</div><div class="t" style="left:1212.80px;top:773.00px;font-size:25.2px;color:#1f1f1f;letter-spacing:0.214px;-webkit-text-stroke:0.35px #1f1f1f;">Business</div><div class="t" style="left:1561.20px;top:773.00px;font-size:25.2px;color:#1f1f1f;letter-spacing:0.640px;-webkit-text-stroke:0.35px #1f1f1f;">Medium</div><div class="t" style="left:1736.80px;top:773.00px;font-size:25.2px;color:#1f1f1f;letter-spacing:0.489px;-webkit-text-stroke:0.35px #1f1f1f;">04/12/2024</div><div class="t" style="left:1969.60px;top:773.00px;font-size:25.2px;color:#1f1f1f;letter-spacing:0.489px;-webkit-text-stroke:0.35px #1f1f1f;">04/12/2024</div><div class="t" style="left:563.60px;top:855.00px;font-size:25.2px;color:#1f1f1f;letter-spacing:0.080px;-webkit-text-stroke:0.35px #1f1f1f;">Compromised Development Environments</div><div class="t" style="left:1213.80px;top:855.00px;font-size:25.2px;color:#1f1f1f;letter-spacing:0.286px;-webkit-text-stroke:0.35px #1f1f1f;">Security</div><div class="t" style="left:1561.20px;top:855.00px;font-size:25.2px;color:#1f1f1f;letter-spacing:0.640px;-webkit-text-stroke:0.35px #1f1f1f;">Medium</div><div class="t" style="left:1736.80px;top:855.00px;font-size:25.2px;color:#1f1f1f;letter-spacing:0.489px;-webkit-text-stroke:0.35px #1f1f1f;">04/12/2024</div><div class="t" style="left:1969.60px;top:855.00px;font-size:25.2px;color:#1f1f1f;letter-spacing:0.489px;-webkit-text-stroke:0.35px #1f1f1f;">04/12/2024</div><div class="t" style="left:563.60px;top:937.00px;font-size:25.2px;color:#1f1f1f;letter-spacing:0.142px;-webkit-text-stroke:0.35px #1f1f1f;">Consumer Privacy Violations</div><div class="t" style="left:1212.80px;top:937.00px;font-size:25.2px;color:#1f1f1f;letter-spacing:0.417px;-webkit-text-stroke:0.35px #1f1f1f;">Privacy</div><div class="t" style="left:1561.20px;top:937.00px;font-size:25.2px;color:#1f1f1f;letter-spacing:0.640px;-webkit-text-stroke:0.35px #1f1f1f;">Medium</div><div class="t" style="left:1736.80px;top:937.00px;font-size:25.2px;color:#1f1f1f;letter-spacing:0.489px;-webkit-text-stroke:0.35px #1f1f1f;">04/12/2024</div><div class="t" style="left:1969.60px;top:937.00px;font-size:25.2px;color:#1f1f1f;letter-spacing:0.489px;-webkit-text-stroke:0.35px #1f1f1f;">04/12/2024</div><div class="t" style="left:563.60px;top:1019.00px;font-size:25.2px;color:#1f1f1f;letter-spacing:0.285px;-webkit-text-stroke:0.35px #1f1f1f;">Corrupted Logs</div><div class="t" style="left:1213.80px;top:1019.00px;font-size:25.2px;color:#1f1f1f;letter-spacing:0.286px;-webkit-text-stroke:0.35px #1f1f1f;">Security</div><div class="t" style="left:1561.20px;top:1019.00px;font-size:25.2px;color:#1f1f1f;letter-spacing:0.640px;-webkit-text-stroke:0.35px #1f1f1f;">Medium</div><div class="t" style="left:1736.80px;top:1019.00px;font-size:25.2px;color:#1f1f1f;letter-spacing:0.489px;-webkit-text-stroke:0.35px #1f1f1f;">04/12/2024</div><div class="t" style="left:1969.60px;top:1019.00px;font-size:25.2px;color:#1f1f1f;letter-spacing:0.489px;-webkit-text-stroke:0.35px #1f1f1f;">04/12/2024</div><div class="t" style="left:563.60px;top:1101.00px;font-size:25.2px;color:#1f1f1f;letter-spacing:0.014px;-webkit-text-stroke:0.35px #1f1f1f;">Cross-Border Data Risks</div><div class="t" style="left:1213.80px;top:1101.00px;font-size:25.2px;color:#1f1f1f;letter-spacing:0.167px;-webkit-text-stroke:0.35px #1f1f1f;">Compliance</div><div class="t" style="left:1561.20px;top:1101.00px;font-size:25.2px;color:#1f1f1f;letter-spacing:0.640px;-webkit-text-stroke:0.35px #1f1f1f;">Medium</div><div class="t" style="left:1736.80px;top:1101.00px;font-size:25.2px;color:#1f1f1f;letter-spacing:0.489px;-webkit-text-stroke:0.35px #1f1f1f;">04/12/2024</div><div class="t" style="left:1969.60px;top:1101.00px;font-size:25.2px;color:#1f1f1f;letter-spacing:0.489px;-webkit-text-stroke:0.35px #1f1f1f;">04/12/2024</div><div class="t" style="left:562.60px;top:1183.00px;font-size:25.2px;color:#1f1f1f;letter-spacing:0.103px;-webkit-text-stroke:0.35px #1f1f1f;">Data Breach Notification Failures</div><div class="t" style="left:1213.80px;top:1183.00px;font-size:25.2px;color:#1f1f1f;letter-spacing:0.167px;-webkit-text-stroke:0.35px #1f1f1f;">Compliance</div><div class="t" style="left:1561.20px;top:1183.00px;font-size:25.2px;color:#1f1f1f;letter-spacing:0.640px;-webkit-text-stroke:0.35px #1f1f1f;">Medium</div><div class="t" style="left:1736.80px;top:1183.00px;font-size:25.2px;color:#1f1f1f;letter-spacing:0.489px;-webkit-text-stroke:0.35px #1f1f1f;">04/12/2024</div><div class="t" style="left:1969.60px;top:1183.00px;font-size:25.2px;color:#1f1f1f;letter-spacing:0.489px;-webkit-text-stroke:0.35px #1f1f1f;">04/12/2024</div><div class="t" style="left:1651.50px;top:1288.80px;font-size:26px;color:#1f1f1f;-webkit-text-stroke:0.35px #1f1f1f;">2</div><div class="t" style="left:1731.50px;top:1288.80px;font-size:26px;color:#1f1f1f;-webkit-text-stroke:0.35px #1f1f1f;">3</div><div class="t" style="left:1812.00px;top:1288.80px;font-size:26px;color:#1f1f1f;-webkit-text-stroke:0.35px #1f1f1f;">4</div><div class="t" style="left:1891.50px;top:1288.80px;font-size:26px;color:#1f1f1f;-webkit-text-stroke:0.35px #1f1f1f;">5</div><div class="t" style="left:2045.00px;top:1289.00px;font-size:26px;color:#1f1f1f;-webkit-text-stroke:0.35px #1f1f1f;">11</div><div class="t" style="left:2229.60px;top:1289.00px;font-size:26px;color:#1f1f1f;letter-spacing:0.675px;-webkit-text-stroke:0.35px #1f1f1f;">10 / page</div>
<div class="r" style="left:2px;top:1402px;width:440px;height:92px;background:#0c1f3e;border-bottom-left-radius:6px;"></div><div class="r" style="left:2px;top:1402px;width:1px;height:86px;background:#000a18;"></div><div class="r" style="left:441px;top:1402px;width:1px;height:92px;background:#000a18;"></div><div class="r" style="left:22px;top:1430px;width:609.3px;height:48px;background:#201a08;box-sizing:border-box;border:2px solid #5a5038;border-radius:24px;box-shadow:0 4px 36px rgba(0,0,0,0.11);"></div>
<div class="t" style="left:39.60px;top:1443.40px;font-size:24.5px;color:#c6c2ba;letter-spacing:1.004px;-webkit-text-stroke:1.1px #c6c2ba;">app.trustworks.io/test_org/risks/templates/create</div>
</body></html>
